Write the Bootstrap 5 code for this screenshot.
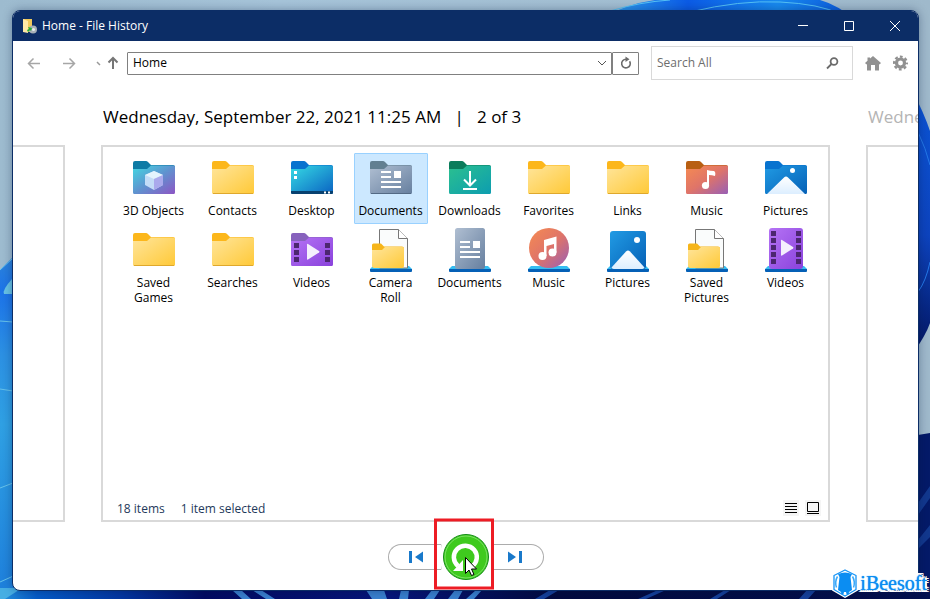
<!DOCTYPE html>
<html lang="en">
<head>
<meta charset="utf-8">
<meta name="viewport" content="width=device-width, initial-scale=1">
<title>Home - File History</title>
<link rel="stylesheet" href="https://cdn.jsdelivr.net/npm/bootstrap@5.3.0/dist/css/bootstrap.min.css">
<style>
body{font-family:"Open Sans","Noto Sans",sans-serif;font-size:12px;line-height:15px;color:#000;background:#a1bdd1}
svg{display:block;flex:none}
button{color:inherit}
.desktop{padding:10px 11px 8px 12px;isolation:isolate}
.wallpaper{z-index:-1}
.fh-window{border:1px solid #0c2d66;border-radius:8px;background:#fff;box-shadow:0 0 10px rgba(0,20,60,.35)}
.titlebar{background:#0c2d66;color:#fff;height:30px;padding-left:9px}
.titlebar .caption-text{padding:0 0 2px 4px}
.win-btn{width:46px;height:30px}
.plain{border:0;background:none;padding:0;display:flex;align-items:center;justify-content:center}
.toolbar{padding:5px 10px 5px 14px;height:44px}
.go-forward{margin-left:22px}
.address{height:23px;border:1px solid #808080;border-radius:1px}
.address input,.search input{border:0;outline:0;background:none;min-width:0;padding:0 5px 2px;color:#000}
.refresh{width:27px;height:23px;border:1px solid #808080;border-radius:1px}
.search{width:202px;height:34px;border:1px solid #d9d9d9;margin-left:12px}
.search input::placeholder{color:#6d6d6d;opacity:1}
.versions{gap:36px;margin-top:19px}
.side{width:52px}
.stamp{font-size:17px;line-height:26px;height:26px;margin:0 0 15px 2px;font-weight:400;white-space:pre}
.stamp.faded{color:#b4b4b4}
.panel{border:2px solid #d9d9d9}
.panel.prev{border-left:0}
.panel.next{border-right:0}
.files{display:grid;grid-template-columns:repeat(auto-fill,79px);grid-auto-rows:minmax(72px,auto);padding:6px 0 0 11px}
.file{width:74px;min-height:71px;margin:0 auto;border:1px solid transparent;border-radius:1px;background:none;padding:0 0 4px;display:flex;flex-direction:column;align-items:center;align-self:start;text-align:center}
.file span{margin-top:1px;max-width:72px}
.file.chosen{background:#cce8ff;border-color:#99d1ff}
.status{padding:0 7px 4px 14px;color:#1e395b}
.view-btn{width:16px;height:16px;background:#f5f5f5;color:#000}
.view-btn + .view-btn{margin-left:6px}
.controls{padding:12px 0 10px 1px}
.pill{height:26px;border:1px solid #acacac;background:#fff;color:#1979ca}
.pill-l{width:53px;border-radius:13px 0 0 13px;border-right:0;padding-left:2px}
.pill-r{width:53px;border-radius:0 13px 13px 0;border-left:0;padding-right:4px}
.highlight{left:50%;top:50%;width:60px;height:71px;transform:translate(-50%,-50%);border:3px solid #ed1c24;pointer-events:none;margin-top:-3px;margin-left:-2px}
.pointer{left:22px;top:22px}
.brand{right:3px;bottom:1px;font-family:"Liberation Serif",serif;font-size:20px;line-height:26px;color:#0b8df2;text-decoration:none;gap:1px}
.brand span{text-shadow:0 0 1px #0b8df2,2px 0 #fff,-2px 0 #fff,0 2px #fff,0 -2px #fff,2px 2px #fff,-2px 2px #fff,2px -2px #fff,-2px -2px #fff}
</style>
<script src="https://cdn.jsdelivr.net/npm/bootstrap@5.3.0/dist/js/bootstrap.bundle.min.js"></script>
</head>
<body>
<svg width="0" height="0" class="position-absolute" aria-hidden="true">
<defs>
<linearGradient id="gy" x1="0" y1="0" x2="1" y2="1"><stop stop-color="#ffe59b"/><stop offset="1" stop-color="#ffc937"/></linearGradient>
<linearGradient id="g3" x1="0" y1="0" x2="1" y2="1"><stop stop-color="#42d9e2"/><stop offset=".5" stop-color="#5f93cf"/><stop offset="1" stop-color="#8d55c4"/></linearGradient>
<linearGradient id="gd" x1="0" y1="0" x2="1" y2="1"><stop stop-color="#36dbe4"/><stop offset="1" stop-color="#0a62c2"/></linearGradient>
<linearGradient id="gs" x1="0" y1="0" x2="1" y2="1"><stop stop-color="#b0bfd2"/><stop offset="1" stop-color="#667f9f"/></linearGradient>
<linearGradient id="gg" x1="0" y1="0" x2="1" y2="1"><stop stop-color="#2bc08f"/><stop offset="1" stop-color="#0d9db0"/></linearGradient>
<linearGradient id="gm" x1="0" y1="0" x2="1" y2="1"><stop stop-color="#f68b51"/><stop offset=".5" stop-color="#df7469"/><stop offset="1" stop-color="#985fb6"/></linearGradient>
<linearGradient id="gp" x1="0" y1="0" x2="1" y2="1"><stop stop-color="#219be4"/><stop offset="1" stop-color="#0560b6"/></linearGradient>
<linearGradient id="gv" x1="0" y1="0" x2="1" y2="1"><stop stop-color="#b573f5"/><stop offset="1" stop-color="#8a42dc"/></linearGradient>
<linearGradient id="gw" x1="0" y1="0" x2="0" y2="1"><stop stop-color="#fff"/><stop offset="1" stop-color="#dceeff"/></linearGradient>
<path id="tab" d="M3 9q0-2 2-2h11q1 0 2 1l3 3h22q2 0 2 2v4H3z"/>
<path id="body" d="M3 15h14l4-3.500h22.500q1.500 0 1.500 1.500v25.500q0 1.500-1.500 1.500h-39Q3 40 3 38.500z"/>
<g id="base"><path d="M6 40h36l3 3H3z" fill="#35bdf1"/><path d="M3 43h42v2q0 1-1 1H4q-1 0-1-1z" fill="#0560b6"/></g>
<g id="i-folder"><use href="#tab" fill="#fcb71b"/><use href="#body" fill="url(#gy)"/><path d="M4 39.500h40" stroke="#dfa82c"/></g>
<g id="i-3d"><use href="#tab" fill="#0e7ba5"/><use href="#body" fill="url(#g3)"/><path d="M24 17l9 4v10l-9 5-9-5V21z" fill="#c3dcf7"/><path d="M24 17l9 4-9 4-9-4z" fill="#e3f4fd"/><path d="M24 25l9-4v10l-9 5z" fill="#aaa9ec"/></g>
<g id="i-desktop"><use href="#tab" fill="#0873cf"/><use href="#body" fill="url(#gd)"/><path d="M3 37h42v1.500q0 1.500-1.500 1.500h-39Q3 40 3 38.500z" fill="#08416f"/><path d="M6 17h3v3H6zM6 22h3v3H6zM36 37.500h2v2h-2zM40 37.500h2v2h-2z" fill="#fff"/></g>
<g id="doclines" fill="#fff"><path d="M14 17h10v2H14zM14 22h10v2H14zM27 17h7v7h-7zM14 27h20v2H14zM14 32h20v2H14z"/></g>
<g id="i-docs"><use href="#tab" fill="#627f91"/><use href="#body" fill="url(#gs)"/><use href="#doclines"/><path d="M4 39.500h40" stroke="#536a85"/></g>
<g id="i-down"><use href="#tab" fill="#0a7c5b"/><use href="#body" fill="url(#gg)"/><path d="M24 17v14M18 25.500l6 6 6-6M17 35h14" fill="none" stroke="#fff" stroke-width="2"/></g>
<g id="i-musicf"><use href="#tab" fill="#b85f12"/><use href="#body" fill="url(#gm)"/><circle cx="22.500" cy="31.500" r="3.600" fill="#fff"/><path d="M24 32V16q3 1 7 1 2 1 1 5-3-1-6-1v11z" fill="#fff"/></g>
<g id="i-picf"><use href="#tab" fill="#0873cf"/><use href="#body" fill="url(#gp)"/><path d="M5 40l17-16.500q2-2 4 0L43 40z" fill="url(#gw)"/><circle cx="30.500" cy="16.500" r="2.500" fill="#fff"/></g>
<path id="play" d="M19 17.500q0-1 1-.5l11 7q1 .8 0 1.500l-11 7q-1 .5-1-.5z" fill="#f5effd"/>
<g id="i-vidf"><use href="#tab" fill="#8762bd"/><use href="#body" fill="url(#gv)"/><path d="M6 17h5v5H6zM6 24h5v5H6zM6 31h5v5H6zM37 17h5v5h-5zM37 24h5v5h-5zM37 31h5v5h-5z" fill="#4c2670"/><use href="#play" y="1"/></g>
<g id="i-roll"><use href="#base"/><path d="M12.500 3.500h19l9 9V42h-28z" fill="#fafcfc" stroke="#777"/><path d="M31.500 3.500v9h9" fill="#fff" stroke="#777"/><path d="M5 19q0-1.500 1.500-1.500H14l3 3h18q2 0 2 2V28H5z" fill="#f6b51a"/><path d="M5 24h10l3-3h17.500q1.500 0 1.500 1.500V40q0 2-2 2H7q-2 0-2-2z" fill="url(#gy)"/></g>
<g id="i-docl"><use href="#base"/><rect x="9" y="2" width="30" height="41" rx="2.500" fill="url(#gs)"/><use href="#doclines" y="-2"/></g>
<g id="i-musl"><use href="#base"/><circle cx="24" cy="22" r="20" fill="url(#gm)"/><circle cx="17.500" cy="30" r="4" fill="#fff"/><circle cx="27.500" cy="26.500" r="4" fill="#fff"/><path d="M19 30V14l12.500-3.500v16h-2.500V18l-7.500 2v10z" fill="#fff"/></g>
<g id="i-picl"><use href="#base"/><rect x="6" y="5" width="36" height="38" rx="3" fill="url(#gp)"/><path d="M7.500 41.500L22 25.500q2-2 4 0l14.500 16q-1 1.500-2.500 1.500H10q-1.500 0-2.500-1.500z" fill="url(#gw)"/><circle cx="33" cy="14" r="3" fill="#fff"/></g>
<g id="i-vidl"><use href="#base"/><rect x="7" y="2" width="34" height="41" rx="3" fill="url(#gv)"/><path d="M9 5h5v5H9zM9 12h5v5H9zM9 19h5v5H9zM9 26h5v5H9zM9 33h5v5H9zM34 5h5v5h-5zM34 12h5v5h-5zM34 19h5v5h-5zM34 26h5v5h-5zM34 33h5v5h-5z" fill="#4c2670"/><use href="#play" y="-3"/></g>
</defs>
</svg>

<div class="desktop position-relative min-vh-100 d-flex flex-column overflow-hidden">
  <svg class="wallpaper position-absolute top-0 start-0 w-100 h-100" viewBox="0 0 930 599" preserveAspectRatio="none" aria-hidden="true">
    <defs>
      <linearGradient id="sky"><stop stop-color="#9dbbcf"/><stop offset=".3" stop-color="#a6c4d9"/><stop offset="1" stop-color="#9fb9cb"/></linearGradient>
      <linearGradient id="petal" x1="0" y1="0" x2="0" y2="1"><stop stop-color="#2f86d6"/><stop offset=".12" stop-color="#1c73e8"/><stop offset=".3" stop-color="#2c90e2"/><stop offset=".5" stop-color="#2fa0e3"/><stop offset="1" stop-color="#1d7edb"/></linearGradient>
      <linearGradient id="bloom"><stop stop-color="#35a9ee"/><stop offset=".35" stop-color="#0b5be6"/><stop offset=".7" stop-color="#188aef"/><stop offset="1" stop-color="#0b55da"/></linearGradient>
      <linearGradient id="floor"><stop stop-color="#2591dc"/><stop offset=".04" stop-color="#055bc6"/><stop offset=".13" stop-color="#0336a0"/><stop offset=".22" stop-color="#020b62"/><stop offset=".42" stop-color="#06157a"/><stop offset=".6" stop-color="#020a3e"/><stop offset="1" stop-color="#03104e"/></linearGradient>
      <linearGradient id="edge" x1="0" y1="0" x2="0" y2="1"><stop stop-color="#0b55d5"/><stop offset=".55" stop-color="#0d43bd"/><stop offset="1" stop-color="#03155f"/></linearGradient>
    </defs>
    <path fill="url(#sky)" d="M0 0h930v599H0z"/>
    <path d="M598 20Q625 4 655 0h165q18 5 35 20z" fill="url(#bloom)"/>
    <path d="M610 11Q640 2 670 0M690 12Q740 0 780 2t60 12" stroke="#55c1f5" fill="none"/>
    <path d="M0 270l20-20v349H0z" fill="url(#petal)"/>
    <path d="M12 279q-10 11-8 15h10z" fill="#67c2e5"/>
    <path d="M0 321l13 1M0 389l13 2M0 488l13-5M0 582l20-9M0 270l13-12" stroke="#67c2ea" fill="none"/>
    <path d="M912 90q12 23 18 41v192q-4 12-18 32z" fill="url(#edge)"/>
    <path d="M918 132q8 17 12 33M918 292q8-11 12-30" stroke="#2478e8" fill="none"/>
    <path d="M912 436l18-3v166h-18z" fill="#041a68"/>
    <path d="M918 503l12-17v12l-12 17zM918 540l12-15v12l-12 12z" fill="#12388e"/>
    <path d="M0 589h930v10H0z" fill="url(#floor)"/>
    <path d="M0 588h22L5 599H0z" fill="#46aee3"/>
    <path d="M232 590h9l10 9h-9zM252 590h9l14 9h-9zM366 590h18l3 9h-15zM401 590h8l-1 9h-9zM432 590h8l-6 9h-9zM455 590h8l-5 9h-10zM476 590h6l-8 9h-8z" fill="#397fce"/>
    <path d="M550 590h9l-15 9h-9zM658 590h8l-20 9h-8zM725 590h6l-14 9h-7zM807 590h9l-8 9h-9z" fill="#15409a"/>
  </svg>

  <main class="fh-window flex-grow-1 d-flex flex-column overflow-hidden">
    <header class="titlebar d-flex align-items-center">
      <svg width="16" height="16" viewBox="0 0 16 16" aria-hidden="true"><path d="M1 1h9v13H1z" fill="#f0c95c"/><path d="M1 1l5 2v12l-5-1z" fill="#ffe9a6"/><circle cx="11" cy="11.500" r="4" fill="#a9b1b7"/><circle cx="11.500" cy="11.500" r="1.500" fill="#e9eef0"/><path d="M6 9l4 1-1 3-1-1-2 2-1-2 2-1z" fill="#25ac35"/></svg>
      <span class="caption-text flex-grow-1">Home - File History</span>
      <button class="plain win-btn" aria-label="Minimize"><svg width="12" height="12"><path d="M1 5.500h10" stroke="#fff"/></svg></button>
      <button class="plain win-btn" aria-label="Maximize"><svg width="12" height="12"><path d="M1.500 1.500h9v9h-9z" fill="none" stroke="#fff"/></svg></button>
      <button class="plain win-btn" aria-label="Close"><svg width="12" height="12"><path d="M1 1l10 10M11 1L1 11" stroke="#fff"/></svg></button>
    </header>

    <nav class="toolbar d-flex align-items-center" aria-label="Navigation">
      <button class="plain" aria-label="Back"><svg width="14" height="14"><path d="M13 7.500H1.500M6.500 2.500l-5 5 5 5" fill="none" stroke="#a6a6a6" stroke-width="1.500"/></svg></button>
      <button class="plain go-forward" aria-label="Forward"><svg width="14" height="14"><path d="M0 7.500h11.500M6.500 2.500l5 5-5 5" fill="none" stroke="#a6a6a6" stroke-width="1.500"/></svg></button>
      <button class="plain ms-3" aria-label="Recent locations"><svg width="12" height="12"><path d="M4 5l3 3" stroke="#999" stroke-width="1.500"/></svg></button>
      <button class="plain" aria-label="Up"><svg width="22" height="14"><path d="M8 13V3M3.500 6.500L8 2l4.500 4.500" fill="none" stroke="#767676" stroke-width="2"/></svg></button>
      <div class="address flex-grow-1 d-flex">
        <input class="flex-grow-1" type="text" value="Home" aria-label="Address">
        <button class="plain px-1" aria-label="Show locations"><svg width="10" height="10"><path d="M1 3l4 4 4-4" fill="none" stroke="#555"/></svg></button>
      </div>
      <button class="plain refresh" aria-label="Refresh"><svg width="14" height="14"><path d="M10.600 5.300A4.300 4.300 0 1 1 7 3.300" fill="none" stroke="#6b6b6b" stroke-width="1.600"/><path d="M6.500 .500v5.500l4-2.750z" fill="#6b6b6b"/></svg></button>
      <form class="search d-flex" role="search">
        <input class="flex-grow-1" type="text" placeholder="Search All" aria-label="Search All">
        <button class="plain pe-2 me-1" type="button" aria-label="Search"><svg width="16" height="14"><circle cx="10" cy="5.500" r="3.400" fill="none" stroke="#6b6b6b" stroke-width="1.800"/><path d="M7.500 8L3 12.500" stroke="#6b6b6b" stroke-width="1.800"/></svg></button>
      </form>
      <button class="plain ms-2 ps-1" aria-label="Home"><svg width="16" height="16"><path d="M8 1l8 7-1.500 1.500L14 9v6.500h-4V10H6v5.500H2V9l-.5.500L0 8l2.500-2.200V2.500H5v1z" fill="#919191"/></svg></button>
      <button class="plain ms-2 ps-1" aria-label="Settings"><svg width="15" height="16" viewBox="0 0 16 16"><circle cx="8" cy="8" r="4.300" fill="none" stroke="#919191" stroke-width="3.400"/><circle cx="8" cy="8" r="6.800" fill="none" stroke="#919191" stroke-width="2.400" stroke-dasharray="3 2.340" stroke-dashoffset="1.500"/></svg></button>
    </nav>

    <div class="versions flex-grow-1 d-flex">
      <section class="side flex-shrink-0 d-flex flex-column"><div class="stamp"></div><div class="panel prev flex-grow-1"></div></section>
      <section class="flex-grow-1 d-flex flex-column">
        <h1 class="stamp">Wednesday, September 22, 2021 11:25 AM   |   2 of 3</h1>
        <div class="panel flex-grow-1 d-flex flex-column">
          <div class="files flex-grow-1 align-content-start">
            <button class="file"><svg width="48" height="48"><use href="#i-3d"/></svg><span>3D Objects</span></button>
            <button class="file"><svg width="48" height="48"><use href="#i-folder"/></svg><span>Contacts</span></button>
            <button class="file"><svg width="48" height="48"><use href="#i-desktop"/></svg><span>Desktop</span></button>
            <button class="file chosen" aria-pressed="true"><svg width="48" height="48"><use href="#i-docs"/></svg><span>Documents</span></button>
            <button class="file"><svg width="48" height="48"><use href="#i-down"/></svg><span>Downloads</span></button>
            <button class="file"><svg width="48" height="48"><use href="#i-folder"/></svg><span>Favorites</span></button>
            <button class="file"><svg width="48" height="48"><use href="#i-folder"/></svg><span>Links</span></button>
            <button class="file"><svg width="48" height="48"><use href="#i-musicf"/></svg><span>Music</span></button>
            <button class="file"><svg width="48" height="48"><use href="#i-picf"/></svg><span>Pictures</span></button>
            <button class="file"><svg width="48" height="48"><use href="#i-folder"/></svg><span>Saved<br>Games</span></button>
            <button class="file"><svg width="48" height="48"><use href="#i-folder"/></svg><span>Searches</span></button>
            <button class="file"><svg width="48" height="48"><use href="#i-vidf"/></svg><span>Videos</span></button>
            <button class="file"><svg width="48" height="48"><use href="#i-roll"/></svg><span>Camera<br>Roll</span></button>
            <button class="file"><svg width="48" height="48"><use href="#i-docl"/></svg><span>Documents</span></button>
            <button class="file"><svg width="48" height="48"><use href="#i-musl"/></svg><span>Music</span></button>
            <button class="file"><svg width="48" height="48"><use href="#i-picl"/></svg><span>Pictures</span></button>
            <button class="file"><svg width="48" height="48"><use href="#i-roll"/></svg><span>Saved<br>Pictures</span></button>
            <button class="file"><svg width="48" height="48"><use href="#i-vidl"/></svg><span>Videos</span></button>
          </div>
          <footer class="status d-flex align-items-center">
            <span>18 items</span><span class="ms-3 me-auto">1 item selected</span>
            <button class="plain view-btn" aria-label="Details view"><svg width="16" height="16"><path d="M2 3.500h12M2 6.500h12M2 9.500h12M2 12.500h12" stroke="#000"/></svg></button>
            <button class="plain view-btn" aria-label="Large icons view"><svg width="16" height="16"><path d="M2.500 2.500h11v9h-11zM2 13.500h12" fill="none" stroke="#000"/></svg></button>
          </footer>
        </div>
      </section>
      <section class="side flex-shrink-0 d-flex flex-column"><div class="stamp faded">Wednesday</div><div class="panel next flex-grow-1"></div></section>
    </div>

    <div class="controls d-flex justify-content-center align-items-center">
      <button class="plain pill pill-l" aria-label="Previous version"><svg width="16" height="14"><path d="M1 1h3v12H1zM15 1.500v11L7 7z" fill="#1979ca"/></svg></button>
      <div class="position-relative">
        <button class="plain" aria-label="Restore to original location"><svg width="50" height="46" viewBox="0 0 50 46"><path d="M0 10.500q-3 12.500 0 25" fill="none" stroke="#acacac"/><circle cx="25" cy="23" r="22.500" fill="#3fca1e" stroke="#138c15"/><circle cx="25" cy="23" r="21" fill="none" stroke="#7be163"/><path d="M31 32.500A11.500 11.500 0 1 0 17 32" fill="none" stroke="#fff" stroke-width="4.500"/><path d="M22 26v11H12z" fill="#fff"/></svg></button>
        <div class="highlight position-absolute"></div>
        <svg class="pointer position-absolute" width="14" height="22" viewBox="0 0 14 22" aria-hidden="true"><path d="M2.500 1.500v16l3.500-3.500 2.500 5.500 2.500-1-2.500-5.500h5z" fill="#fff" stroke="#000"/></svg>
      </div>
      <button class="plain pill pill-r" aria-label="Next version"><svg width="16" height="14"><path d="M12 1h3v12h-3zM1 1.500v11L9 7z" fill="#1979ca"/></svg></button>
    </div>
  </main>

  <a class="brand position-absolute d-flex align-items-center" href="#">
    <svg width="28" height="30" viewBox="0 0 28 30" aria-hidden="true"><path d="M14 1l12 6v15l-12 7-12-7V7z" fill="#fff" stroke="#fff" stroke-width="2" stroke-linejoin="round"/><path d="M14 2l11 5.500v14L14 28 3 21.500v-14z" fill="none" stroke="#1594f6" stroke-width="1.300" stroke-linejoin="round"/><path d="M7 6q7-3 14 0l-1.500 3 1.500 13-3 2-.5 2.500-2-.5-.5-2h-2l-.5 2-2 .5-.5-2.500-3-2L8.500 9z" fill="#0b8df2"/><path d="M6.500 8.500q-3 5-1 11M21.500 8.500q3 5 1 11" fill="none" stroke="#3aaafa" stroke-width="1.500"/></svg>
    <span>iBeesoft</span>
  </a>
</div>
</body>
</html>
